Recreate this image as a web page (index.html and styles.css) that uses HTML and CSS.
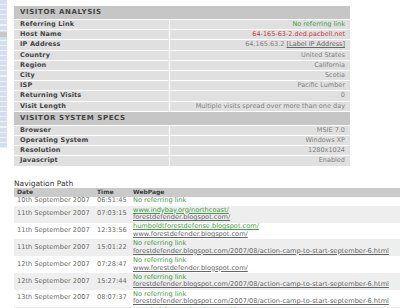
FILE: index.html
```html
<!DOCTYPE html>
<html>
<head>
<meta charset="utf-8">
<link rel="stylesheet" href="styles.css">
</head>
<body>
<div class="page">
  <div class="sidebar"><div class="side-gray"></div></div>
  <div class="main">
    <table class="stats">
      <tr><th colspan="2" class="sec">VISITOR ANALYSIS</th></tr>
      <tr><td class="lbl">Referring Link</td><td class="val green">No referring link</td></tr>
      <tr><td class="lbl">Host Name</td><td class="val red">64-165-63-2.ded.pacbell.net</td></tr>
      <tr><td class="lbl">IP Address</td><td class="val">64.165.63.2 <span class="ulink">[Label IP Address]</span></td></tr>
      <tr><td class="lbl">Country</td><td class="val">United States</td></tr>
      <tr><td class="lbl">Region</td><td class="val">California</td></tr>
      <tr><td class="lbl">City</td><td class="val">Scotia</td></tr>
      <tr><td class="lbl">ISP</td><td class="val">Pacific Lumber</td></tr>
      <tr><td class="lbl">Returning Visits</td><td class="val">0</td></tr>
      <tr><td class="lbl">Visit Length</td><td class="val">Multiple visits spread over more than one day</td></tr>
      <tr><th colspan="2" class="sec">VISITOR SYSTEM SPECS</th></tr>
      <tr><td class="lbl">Browser</td><td class="val">MSIE 7.0</td></tr>
      <tr><td class="lbl">Operating System</td><td class="val">Windows XP</td></tr>
      <tr><td class="lbl">Resolution</td><td class="val">1280x1024</td></tr>
      <tr><td class="lbl">Javascript</td><td class="val">Enabled</td></tr>
    </table>

    <div class="navtitle">Navigation Path</div>

    <table class="nav">
      <tr class="head"><th class="c-date">Date</th><th class="c-time">Time</th><th class="c-web">WebPage</th></tr>
      <tr><td>10th September 2007</td><td>06:51:45</td><td class="web"><span class="g">No referring link</span></td></tr>
      <tr class="alt"><td>11th September 2007</td><td>07:03:15</td><td class="web"><span class="g u">www.indybay.org/northcoast/</span><br><span class="k u">forestdefender.blogspot.com/</span></td></tr>
      <tr><td>11th September 2007</td><td>12:33:56</td><td class="web"><span class="g u">humboldtforestdefense.blogspot.com/</span><br><span class="k u">www.forestdefender.blogspot.com/</span></td></tr>
      <tr class="alt"><td>11th September 2007</td><td>15:01:22</td><td class="web"><span class="g">No referring link</span><br><span class="k u">forestdefender.blogspot.com/2007/08/action-camp-to-start-september-6.html</span></td></tr>
      <tr><td>12th September 2007</td><td>07:28:47</td><td class="web"><span class="g">No referring link</span><br><span class="k u">www.forestdefender.blogspot.com/</span></td></tr>
      <tr class="alt"><td>12th September 2007</td><td>15:27:44</td><td class="web"><span class="g">No referring link</span><br><span class="k u">forestdefender.blogspot.com/2007/08/action-camp-to-start-september-6.html</span></td></tr>
      <tr><td>13th September 2007</td><td>08:07:37</td><td class="web"><span class="g">No referring link</span><br><span class="k u">forestdefender.blogspot.com/2007/08/action-camp-to-start-september-6.html</span></td></tr>
      <tr class="alt"><td>14th September 2007</td><td>15:30:15</td><td class="web"><span class="g u">www.indybay.org/environment/</span><br><span class="k u">forestdefender.blogspot.com/</span></td></tr>
    </table>
  </div>
</div>
</body>
</html>
```

FILE: styles.css
```css
html, body {
  margin: 0;
  padding: 0;
  background: #ffffff;
  overflow: hidden;
}
body {
  width: 400px;
  height: 308px;
  font-family: "DejaVu Sans", Verdana, sans-serif;
  color: #555;
}
.page {
  display: flex;
  align-items: flex-start;
  gap: 7px;
}
.sidebar {
  width: 7px;
  height: 148px;
  flex: none;
  background: repeating-linear-gradient(to bottom, #d3dff0 0, #d3dff0 4px, #eef3f9 4px, #eef3f9 5.1px);
  padding-top: 32px;
  box-sizing: border-box;
}
.side-gray {
  height: 5px;
  background: #c9c9c9;
}
.main {
  flex: none;
  width: 386px;
  padding-top: 6px;
}
.stats {
  width: 336px;
  border-collapse: collapse;
  border-spacing: 0;
}
.stats th.sec {
  background: #c6c6c6;
  color: #444;
  font-size: 7px;
  font-weight: bold;
  letter-spacing: 0.6px;
  text-align: left;
  height: 13px;
  line-height: 13px;
  padding: 0 0 0 6px;
  border-bottom: 1px solid #fff;
}
.stats td {
  background: #e0e0e0;
  height: 9.2px;
  line-height: 9.2px;
  padding: 0;
  border-bottom: 1px solid #fff;
  font-size: 6.5px;
  white-space: nowrap;
}
.stats td.lbl {
  width: 149px;
  padding-left: 6px;
  font-weight: bold;
  color: #444;
  letter-spacing: 0.15px;
  border-right: 1px solid #fff;
}
.stats td.val {
  text-align: right;
  padding-right: 5px;
  color: #808080;
}
.stats td.green { color: #3f9a3f; }
.stats td.red { color: #c43a3a; }
.ulink {
  text-decoration: underline;
  color: #666;
}
.navtitle {
  margin-top: 12px;
  height: 9.5px;
  line-height: 9.5px;
  font-size: 7.5px;
  color: #333;
}
.nav {
  width: 386px;
  border-collapse: collapse;
  border-spacing: 0;
}
.nav th {
  background: #cacaca;
  color: #3a3a3a;
  font-size: 6px;
  font-weight: bold;
  text-align: left;
  height: 8.5px;
  line-height: 8.5px;
  padding: 0 0 0 3px;
}
.nav th.c-date { width: 77px; }
.nav th.c-time { width: 33px; }
.nav td {
  font-size: 6.6px;
  line-height: 7.6px;
  padding: 0.8px 0 0.8px 3px;
  vertical-align: middle;
  color: #6a6a6a;
  white-space: nowrap;
}
.nav tr.alt td { background: #eeeeee; }
.nav .g { color: #3f9a3f; }
.nav .k { color: #666; }
.nav .u { text-decoration: underline; }
```
